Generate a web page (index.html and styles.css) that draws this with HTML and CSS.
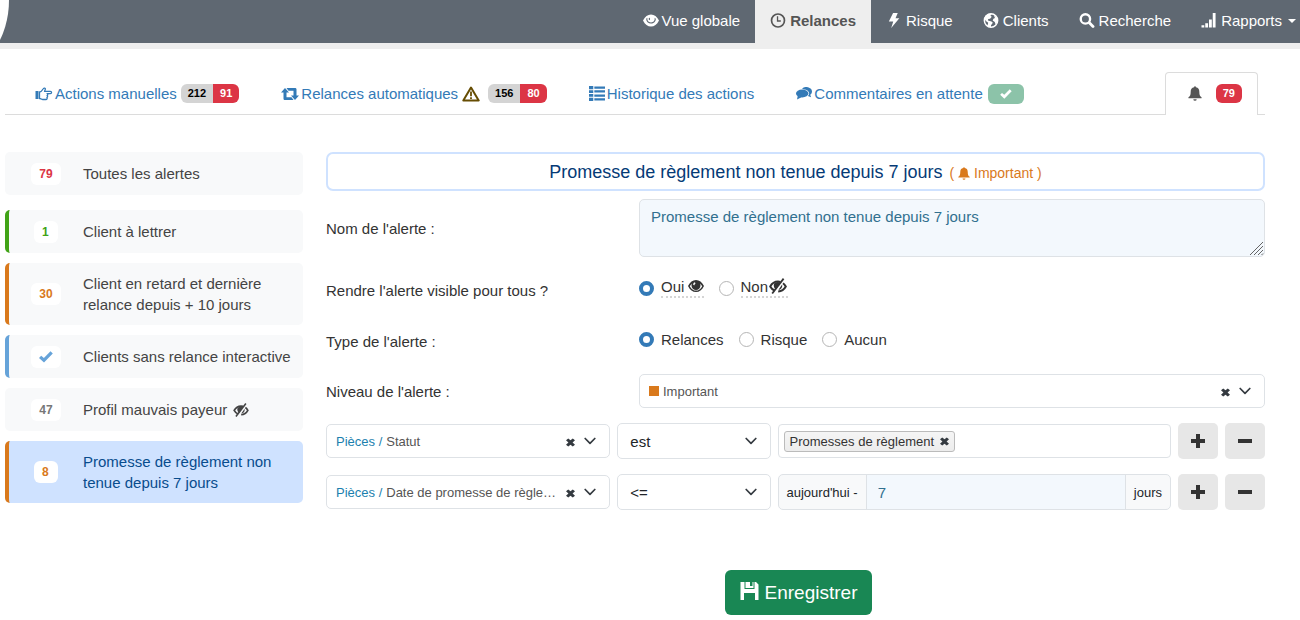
FILE: index.html
```html
<!DOCTYPE html>
<html lang="fr">
<head>
<meta charset="utf-8">
<meta name="viewport" content="width=device-width, initial-scale=1">
<title>Relances - Alertes</title>
<link rel="stylesheet" href="styles.css">
</head>
<body>
<svg class="sprite" aria-hidden="true">
  <symbol id="eye" viewBox="0 0 16 14"><path fill="currentColor" fill-rule="evenodd" d="M0 7C2 3 4.700 1 8 1s6 2 8 6c-2 4-4.700 6-8 6S2 11 0 7zM1.800 7.200C3.400 10.200 5.500 11.600 8 11.600s4.600-1.400 6.200-4.400C13.500 6 12.800 5 12 4.400c.3.700.5 1.400.5 2.100A4.500 4.500 0 0 1 3.500 6.500c0-.7.2-1.400.5-2.100C3.200 5 2.500 6 1.800 7.200zM6.500 3.200c-.9.500-1.400 1.600-1.200 2.700l1.300.3c0-1 .3-1.500 1.200-1.900z"/></symbol>
  <symbol id="eye-light" viewBox="0 0 16 14"><path fill="currentColor" fill-rule="evenodd" d="M0 7C2 3 4.700 1 8 1s6 2 8 6c-2 4-4.700 6-8 6S2 11 0 7zM3.200 5.200C3.200 8 5.200 10 8 10s4.800-2 4.800-4.800l-1.100-1C12 7 10.500 8.900 8 8.900S4 7 4.300 4.200zM6 4.300c-.5 1-.3 1.800.3 2.400l.8-.4c-.4-.5-.4-1.100 0-1.800z"/></symbol>
  <symbol id="eye-off" viewBox="0 0 18 16"><path fill="none" stroke="currentColor" stroke-width="2" d="M5.500 12.500C3.600 11.700 2.200 10.300 1.200 8.500 3 5.200 5.500 3.500 9 3.500c.9 0 1.700.1 2.400.4M14 5.200c1.100.8 2 1.900 2.800 3.300-1.700 3.200-4.200 4.800-7.600 4.900"/><path fill="currentColor" d="M5 5.500c-.8 3 .3 5 2 5.800l4.500-7L8 4zM9.500 11.800c2.700-.2 4.200-2.500 3.600-5.300z"/><path stroke="currentColor" stroke-width="1.800" d="M3.200 15.500L14.600.6"/></symbol>
  <symbol id="clock" viewBox="0 0 16 16"><circle cx="8" cy="8" r="6.900" fill="none" stroke="currentColor" stroke-width="1.800"/><path fill="none" stroke="currentColor" stroke-width="1.400" d="M7.500 3.500v5H11"/></symbol>
  <symbol id="bolt" viewBox="0 0 12 16"><path fill="currentColor" d="M5 0h5L7.600 5.500h4.100L3 16l2.200-7H.5z"/></symbol>
  <symbol id="globe" viewBox="0 0 16 16"><circle cx="8" cy="8" r="7.100" fill="none" stroke="currentColor" stroke-width="1.600"/><path fill="currentColor" d="M2 3l4-2.300 3 .6-1.700 1.600 1.500 1L7 6 5 6.500 4.800 8 8.500 9l1.500 1.500L8 13v2.200L4 14 5 10.500 2.500 8.500 1 6zM11 2l3 2.500 1.500 4-2.500 4-1-3L9.800 8l.8-2 1.600-.7z"/></symbol>
  <symbol id="search" viewBox="0 0 16 16"><circle cx="6.300" cy="6.300" r="5" fill="none" stroke="currentColor" stroke-width="2.500"/><path stroke="currentColor" stroke-width="3" stroke-linecap="round" d="M10.500 10.500l3.900 3.900"/></symbol>
  <symbol id="signal" viewBox="0 0 16 16"><path fill="currentColor" d="M0 13h3v2.500H0zM4 11h3v4.500H4zM8 7h3v8.500H8zM12 0h3v15.500h-3z"/></symbol>
  <symbol id="hand" viewBox="0 0 17 14"><path fill="currentColor" d="M0 4h3v8H0z"/><path fill="none" stroke="currentColor" stroke-width="1.300" stroke-linejoin="round" d="M4 5c2 0 2.500-1.500 3.500-3 .6-1 1.900-1.300 2.300-.5.400.9-.5 1.700-.8 2.800h5.800c1.700 0 1.700 2.300 0 2.300H11.500c1 .4 1 1.700.1 2 .8.500.6 1.600-.2 1.900.6.600.2 2-1 2H7.300C6 12.500 5.500 11.500 4 11.500z"/></symbol>
  <symbol id="retweet" viewBox="0 0 18 12"><path fill="currentColor" d="M4 0l4 4.500H5.500v4.700h5L12.500 12H4c-1 0-1.500-.5-1.500-1.500v-6H0zM14 12l4-4.500h-2.500v-6C15.500.5 15 0 14 0H5.500l2 2.800h5v4.700H10z"/></symbol>
  <symbol id="warning" viewBox="0 0 18 16"><path fill="#fff" stroke="currentColor" stroke-width="2" stroke-linejoin="round" d="M9 1.500l7.700 13H1.300z"/><path stroke="currentColor" stroke-width="1.800" d="M9 5.500v4.700M9 11.200V13"/></symbol>
  <symbol id="list" viewBox="0 0 15 14"><path fill="currentColor" d="M0 0h4v3H0zM5 .5h10v2H5zM0 4h4v2.500H0zM5 4h10v2H5zM0 7.500h4V10H0zM5 8h10v2H5zM0 11h4v3H0zM5 11.500h10v2H5z"/></symbol>
  <symbol id="comments" viewBox="0 0 16 13"><path fill="currentColor" d="M9.500 0C13 0 16 1.600 16 4.400c0 1.500-.8 2.500-1.800 3.300l.9 2.500-3.200-1.200c1-1 1.300-2 1.200-2.800C12.700 3.700 10 2.200 6 2 7 .8 8 0 9.500 0z"/><ellipse cx="6.200" cy="6.500" rx="6.200" ry="3.900" fill="currentColor"/><path fill="currentColor" d="M1.800 8.500L1 12.500l4.500-2.300z"/></symbol>
  <symbol id="check" viewBox="0 0 14 12"><path fill="currentColor" d="M0 7l2.200-2.300 2.700 2.200L11.500.3l2.300 2.300L5 11.600z"/></symbol>
  <symbol id="bell" viewBox="0 0 14 16"><path fill="currentColor" d="M6 1.200a1 1 0 0 1 2 0C10.500 1.700 11.600 3.500 11.600 6c0 3.500.8 5 2.400 6v1H0v-1c1.600-1 2.400-2.500 2.400-6C2.400 3.500 3.500 1.700 6 1.200zM5.200 14h3.600a1.800 1.800 0 0 1-3.600 0z"/></symbol>
  <symbol id="cross" viewBox="0 0 10 10"><path fill="currentColor" d="M0 2.500L2.500.5 5 2.600 7.500.5 10 2.500 7.300 5 10 7.500l-2.500 2L5 7.400 2.500 9.500 0 7.500 2.700 5z"/></symbol>
  <symbol id="chevron" viewBox="0 0 12 8"><path fill="none" stroke="currentColor" stroke-width="1.700" stroke-linecap="round" stroke-linejoin="round" d="M1.200 1.500L6 6.300l4.800-4.800"/></symbol>
  <symbol id="plus" viewBox="0 0 14 14"><path fill="currentColor" d="M5 0h4v5h5v4H9v5H5V9H0V5h5z"/></symbol>
  <symbol id="minus" viewBox="0 0 14 14"><path fill="currentColor" d="M0 5h14v4H0z"/></symbol>
  <symbol id="save" viewBox="0 0 18 18"><path fill="currentColor" fill-rule="evenodd" d="M0 0h4v7h10V0h1.500L18 2.500V18h-3.500v-7h-11v7H0zM5 0h4.500v4H12V0h1v6H5z"/></symbol>
</svg>

<header class="topbar">
  <nav class="mainnav" aria-label="Navigation principale">
    <a href="#"><svg class="ico"><use href="#eye-light"/></svg>Vue globale</a>
    <a href="#" class="current" aria-current="page"><svg class="ico"><use href="#clock"/></svg>Relances</a>
    <a href="#"><svg class="ico"><use href="#bolt"/></svg>Risque</a>
    <a href="#"><svg class="ico"><use href="#globe"/></svg>Clients</a>
    <a href="#"><svg class="ico"><use href="#search"/></svg>Recherche</a>
    <a href="#"><svg class="ico"><use href="#signal"/></svg>Rapports<span class="caret"></span></a>
  </nav>
</header>

<div class="page">
  <nav class="tabs" aria-label="Relances">
    <a href="#"><svg class="ico wide"><use href="#hand"/></svg>Actions manuelles <span class="counts"><span class="count grey">212</span><span class="count red">91</span></span></a>
    <a href="#"><svg class="ico wide"><use href="#retweet"/></svg>Relances automatiques <svg class="ico warn"><use href="#warning"/></svg><span class="counts"><span class="count grey">156</span><span class="count red">80</span></span></a>
    <a href="#"><svg class="ico"><use href="#list"/></svg>Historique des actions</a>
    <a href="#"><svg class="ico"><use href="#comments"/></svg>Commentaires en attente <span class="done"><svg><use href="#check"/></svg></span></a>
    <a href="#" class="active" aria-label="Alertes"><svg class="ico"><use href="#bell"/></svg><span class="counts"><span class="count red">79</span></span></a>
  </nav>

  <div class="columns">
    <aside class="alerts">
      <a href="#" class="alert all"><span class="num red-text">79</span><span>Toutes les alertes</span></a>
      <a href="#" class="alert green"><span class="num">1</span><span>Client à lettrer</span></a>
      <a href="#" class="alert orange"><span class="num">30</span><span>Client en retard et dernière relance depuis + 10 jours</span></a>
      <a href="#" class="alert blue"><span class="num"><svg class="tick"><use href="#check"/></svg></span><span>Clients sans relance interactive</span></a>
      <a href="#" class="alert"><span class="num">47</span><span>Profil mauvais payeur <svg class="hidden-eye"><use href="#eye-off"/></svg></span></a>
      <a href="#" class="alert orange selected"><span class="num">8</span><span>Promesse de règlement non tenue depuis 7 jours</span></a>
    </aside>

    <main>
      <h1 class="title">Promesse de règlement non tenue depuis 7 jours <small>( <svg><use href="#bell"/></svg> Important )</small></h1>
      <form class="form">
        <div class="field">
          <label for="nom">Nom de l'alerte :</label>
          <div class="area">
            <textarea id="nom" rows="2">Promesse de règlement non tenue depuis 7 jours</textarea>
            <svg class="grip" viewBox="0 0 15 15" aria-hidden="true"><path d="M1 14L14 1M5 14l9-9M9 14l5-5M12.500 14l1.500-1.500"/></svg>
          </div>
        </div>
        <div class="field" role="radiogroup" aria-labelledby="visible-label">
          <span id="visible-label">Rendre l'alerte visible pour tous ?</span>
          <div class="radios">
            <label><input type="radio" name="visible" checked><span class="hint">Oui <svg class="eye-on"><use href="#eye"/></svg></span></label>
            <label><input type="radio" name="visible"><span class="hint">Non<svg class="eye-no"><use href="#eye-off"/></svg></span></label>
          </div>
        </div>
        <div class="field" role="radiogroup" aria-labelledby="type-label">
          <span id="type-label">Type de l'alerte :</span>
          <div class="radios">
            <label><input type="radio" name="type" checked>Relances</label>
            <label><input type="radio" name="type">Risque</label>
            <label><input type="radio" name="type">Aucun</label>
          </div>
        </div>
        <div class="field compact">
          <label for="niveau">Niveau de l'alerte :</label>
          <div class="picker">
            <span class="swatch"></span>
            <select id="niveau"><option>Important</option></select>
            <button type="button" class="clear" aria-label="Effacer"><svg><use href="#cross"/></svg></button>
            <svg class="chev"><use href="#chevron"/></svg>
          </div>
        </div>

        <div class="rule">
          <div class="picker">
            <span class="group">Pièces /</span>
            <select aria-label="Champ"><option>Statut</option></select>
            <button type="button" class="clear" aria-label="Effacer"><svg><use href="#cross"/></svg></button>
            <svg class="chev"><use href="#chevron"/></svg>
          </div>
          <div class="operator">
            <select aria-label="Opérateur"><option>est</option></select>
            <svg class="chev"><use href="#chevron"/></svg>
          </div>
          <div class="tags">
            <span class="tag">Promesses de règlement<button type="button" aria-label="Retirer"><svg><use href="#cross"/></svg></button></span>
          </div>
          <button type="button" class="square" aria-label="Ajouter"><svg><use href="#plus"/></svg></button>
          <button type="button" class="square" aria-label="Supprimer"><svg><use href="#minus"/></svg></button>
        </div>

        <div class="rule">
          <div class="picker">
            <span class="group">Pièces /</span>
            <select aria-label="Champ"><option>Date de promesse de règlement</option></select>
            <button type="button" class="clear" aria-label="Effacer"><svg><use href="#cross"/></svg></button>
            <svg class="chev"><use href="#chevron"/></svg>
          </div>
          <div class="operator">
            <select aria-label="Opérateur"><option>&lt;=</option></select>
            <svg class="chev"><use href="#chevron"/></svg>
          </div>
          <div class="amount">
            <label for="jours">aujourd'hui -</label>
            <input id="jours" type="text" value="7">
            <span>jours</span>
          </div>
          <button type="button" class="square" aria-label="Ajouter"><svg><use href="#plus"/></svg></button>
          <button type="button" class="square" aria-label="Supprimer"><svg><use href="#minus"/></svg></button>
        </div>

        <div class="submit">
          <button type="submit"><svg><use href="#save"/></svg>Enregistrer</button>
        </div>
      </form>
    </main>
  </div>
</div>
</body>
</html>
```

FILE: styles.css
```css
* {
  box-sizing: border-box;
}

body {
  margin: 0;
  background: #fff;
  color: #333;
  font: 15px/21px "Liberation Sans", Arial, sans-serif;
}

a {
  color: #337ab7;
  text-decoration: none;
}

button,
input,
select,
textarea {
  font: inherit;
}

button {
  cursor: pointer;
}

.sprite {
  position: absolute;
  width: 0;
  height: 0;
}

.ico {
  flex: none;
  width: 16px;
  height: 15px;
}

.ico.wide {
  width: 18px;
  height: 14px;
}

/* Top bar */

.topbar {
  display: flex;
  justify-content: flex-end;
  position: relative;
  overflow: hidden;
  background: #5f6872;
  border-bottom: 6px solid #eee;
}

.topbar::before {
  content: "";
  position: absolute;
  left: -91px;
  top: -70px;
  width: 100px;
  height: 140px;
  border-radius: 50%;
  background: #fff;
}

.mainnav {
  display: flex;
}

.mainnav a {
  display: flex;
  align-items: center;
  gap: 4px;
  padding: 10px 15px 12px;
  color: #fff;
  white-space: nowrap;
}

.mainnav a:first-child {
  gap: 2px;
}

.mainnav a:last-child {
  padding-right: 4px;
}

.mainnav .current {
  background: #eee;
  color: #555;
  font-weight: bold;
}

.caret {
  margin-left: 2px;
  border: 4px solid transparent;
  border-top-color: currentColor;
  border-bottom: 0;
}

/* Tabs */

.page {
  padding: 23px 35px 4px 5px;
}

.tabs {
  display: flex;
  border-bottom: 1px solid #dcdcdc;
}

.tabs a {
  display: flex;
  align-items: center;
  gap: 2px;
  padding: 11px 12px 10px 30px;
  white-space: nowrap;
}

.tabs .active {
  gap: 11px;
  margin: 0 7px -1px auto;
  padding: 10px 15px 11px 21px;
  border: 1px solid #dcdcdc;
  border-bottom: 0;
  border-radius: 4px 4px 0 0;
  background: #fff;
  color: #555;
}

.warn {
  width: 18px;
  height: 16px;
  margin: 0 4px 0 2px;
  color: #664d03;
}

.counts {
  display: flex;
  margin-left: 2px;
  border-radius: 6px;
  overflow: hidden;
  font-size: 11px;
  font-weight: bold;
  line-height: 19px;
}

.count {
  padding: 0 7px;
}

.grey {
  background: #d4d4d4;
  color: #000;
}

.red {
  background: #dc3545;
  color: #fff;
}

.done {
  display: flex;
  align-items: center;
  justify-content: center;
  width: 36px;
  height: 20px;
  margin-left: 3px;
  border-radius: 6px;
  background: #8cc3a9;
  color: #fff;
}

.done svg {
  width: 12px;
  height: 10px;
}

/* Page columns */

.columns {
  display: grid;
  grid-template-columns: calc(25% - 17px) minmax(0, 1fr);
  gap: 23px;
  align-items: start;
  padding-top: 37px;
}

/* Alert list */

.alerts {
  display: flex;
  flex-direction: column;
  gap: 10px;
}

.alert {
  display: grid;
  grid-template-columns: 74px 1fr;
  align-items: center;
  min-height: 43px;
  padding: 10px 8px 10px 0;
  border-left: 4px solid #f8f9fa;
  border-radius: 5px;
  background: #f8f9fa;
  color: #444;
}

.alert.all {
  margin-bottom: 5px;
}

.num {
  justify-self: center;
  min-width: 24px;
  padding: 1px 8px 0;
  border-radius: 6px;
  background: #fff;
  color: #777;
  font-size: 12px;
  font-weight: bold;
}

.red-text {
  color: #dc3545;
}

.green {
  border-left-color: #41a317;
}

.green .num {
  color: #41a317;
}

.orange {
  border-left-color: #d9791c;
}

.orange .num {
  color: #d9791c;
}

.blue {
  border-left-color: #66a3d9;
}

.blue .num {
  color: #66a3d9;
}

.alert.selected {
  background: #cfe2ff;
  color: #084c8d;
}

.tick {
  width: 14px;
  height: 12px;
  vertical-align: -2px;
}

.hidden-eye {
  width: 16px;
  height: 14px;
  margin-left: 2px;
  vertical-align: -2px;
}

/* Alert form */

.title {
  margin: 0 0 8px;
  padding: 8px 12px 6px;
  border: 2px solid #cfe2ff;
  border-radius: 7px;
  color: #053a76;
  font-size: 18px;
  font-weight: normal;
  text-align: center;
}

.title small {
  margin-left: 2px;
  color: #d9791c;
  font-size: 14px;
  line-height: 14px;
}

.title svg {
  width: 12px;
  height: 13px;
  vertical-align: -2px;
}

.form {
  display: flex;
  flex-direction: column;
  gap: 15px;
}

.field {
  display: grid;
  grid-template-columns: 1fr 2fr;
  align-items: center;
  min-height: 36px;
}

.field.compact {
  min-height: 34px;
}

.area {
  position: relative;
}

textarea {
  display: block;
  width: 100%;
  height: 58px;
  padding: 6px 11px;
  border: 1px solid #dee2e6;
  border-radius: 5px;
  background: #f3f8fd;
  color: #31708f;
  resize: none;
}

.grip {
  position: absolute;
  right: 1px;
  bottom: 1px;
  width: 15px;
  height: 15px;
  fill: none;
  stroke: #666;
  stroke-width: 1;
  pointer-events: none;
}

.radios {
  display: flex;
  gap: 15px;
  padding-bottom: 4px;
}

.radios label {
  display: flex;
  align-items: center;
  gap: 7px;
}

.radios input {
  appearance: none;
  width: 15px;
  height: 15px;
  margin: 0;
  border: 1px solid #b5b5b5;
  border-radius: 50%;
  background: #fff;
}

.radios input:checked {
  border: 4px solid #337ab7;
}

.hint {
  border-bottom: 2px dotted #d5d5d5;
  line-height: 18px;
}

.eye-on {
  width: 16px;
  height: 14px;
  margin-left: -1px;
  vertical-align: -1px;
}

.eye-no {
  width: 20px;
  height: 16px;
  vertical-align: -2px;
}

.picker {
  display: flex;
  align-items: center;
  min-width: 0;
  height: 34px;
  padding: 0 13px 0 9px;
  border: 1px solid #dee2e6;
  border-radius: 5px;
  color: #555;
  font-size: 13px;
}

.picker select {
  flex: 1;
  min-width: 0;
  padding: 0 4px;
  border: 0;
  appearance: none;
  background: none;
  color: inherit;
  text-overflow: ellipsis;
}

.swatch {
  width: 10px;
  height: 10px;
  background: #d9791c;
}

.group {
  color: #1c7fae;
}

.clear,
.tag button {
  display: flex;
  padding: 0;
  border: 0;
  background: none;
  color: #343a40;
}

.clear {
  margin: 2px 9px 0 5px;
}

.clear svg {
  width: 9px;
  height: 9px;
}

.chev {
  flex: none;
  width: 12px;
  height: 8px;
  color: #343a40;
}

.rule {
  display: grid;
  grid-template-columns: 284fr 153fr 393fr 40px 40px;
  align-items: center;
  column-gap: 7px;
}

.operator {
  display: grid;
  align-items: center;
}

.operator select,
.operator .chev {
  grid-area: 1 / 1;
}

.operator select {
  width: 100%;
  height: 36px;
  padding: 0 36px 0 12px;
  border: 1px solid #dee2e6;
  border-radius: 5px;
  appearance: none;
  background: #fff;
  color: #212529;
}

.operator .chev {
  justify-self: end;
  margin-right: 14px;
  pointer-events: none;
}

.tags {
  display: flex;
  align-items: center;
  height: 34px;
  padding: 0 5px;
  border: 1px solid #dee2e6;
  border-radius: 4px;
}

.tag {
  display: flex;
  align-items: center;
  gap: 6px;
  padding: 0 5px;
  border: 1px solid #bbb;
  border-radius: 3px;
  background: linear-gradient(#f5f5f5, #ececec);
  font-size: 13px;
  line-height: 19px;
}

.tag svg {
  width: 9px;
  height: 9px;
}

.amount {
  display: flex;
  align-items: center;
  height: 36px;
  border: 1px solid #dee2e6;
  border-radius: 5px;
  overflow: hidden;
  background: #f8f9fa;
  color: #212529;
  font-size: 13px;
}

.amount label,
.amount span {
  padding: 0 8px;
}

.amount input {
  flex: 1;
  min-width: 0;
  height: 100%;
  padding: 0 11px;
  border: solid #dee2e6;
  border-width: 0 1px;
  background: #f3f8fd;
  color: #31708f;
  font-size: 15px;
}

.square {
  display: flex;
  align-items: center;
  justify-content: center;
  height: 36px;
  padding: 0;
  border: 0;
  border-radius: 5px;
  background: #e7e7e7;
  color: #333;
}

.square svg {
  width: 14px;
  height: 14px;
}

.submit {
  display: flex;
  justify-content: center;
  margin-top: 45px;
  padding-left: 6px;
}

.submit button {
  display: flex;
  align-items: center;
  gap: 6px;
  padding: 8px 15px;
  border: 0;
  border-radius: 6px;
  background: #198754;
  color: #fff;
  font-size: 19px;
  line-height: 29px;
}

.submit svg {
  width: 19px;
  height: 18px;
  margin-bottom: 4px;
}
```
